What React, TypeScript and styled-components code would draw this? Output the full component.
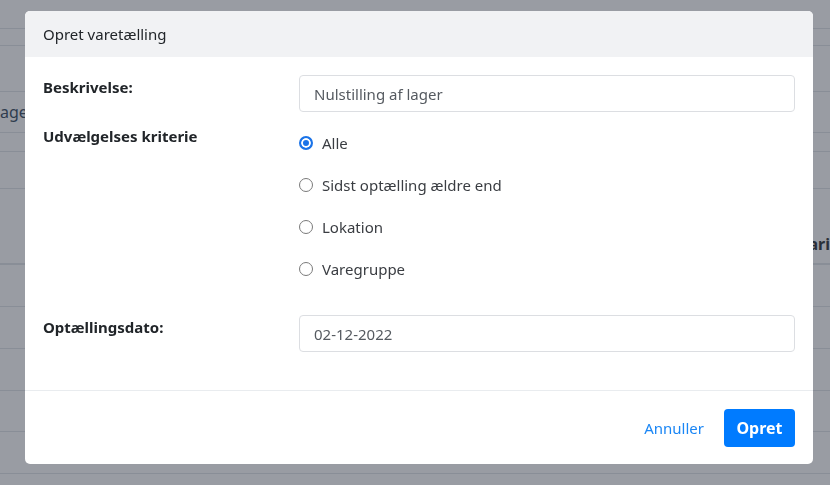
import styled, { createGlobalStyle } from "styled-components";

const GlobalStyle = createGlobalStyle`
  html, body {
    margin: 0;
    padding: 0;
    height: 100%;
    overflow: hidden;
  }
  body {
    font-family: "Noto Sans", "Liberation Sans", sans-serif;
    background: #ffffff;
  }
`;

// page rows behind the backdrop: height and a bit of text at the edges
const pageRows = [
  { h: 29 },
  { h: 17 },
  { h: 46 },
  { h: 41, left: "ager" },
  { h: 19 },
  { h: 37 },
  { h: 76, right: "ari", heavy: true },
  { h: 42 },
  { h: 42 },
  { h: 42 },
  { h: 41 },
  { h: 42 },
];

const criteria = ["Alle", "Sidst optælling ældre end", "Lokation", "Varegruppe"];

function App() {
  return (
    <>
      <GlobalStyle />
      <Page>
        {pageRows.map((row, i) => (
          <PageRow key={i} $height={row.h} $heavy={row.heavy}>
            {row.left && <EdgeLeft>{row.left}</EdgeLeft>}
            {row.right && <EdgeRight>{row.right}</EdgeRight>}
          </PageRow>
        ))}
      </Page>
      <Backdrop />
      <Dialog>
        <Header>Opret varetælling</Header>
        <Body>
          <FormRow>
            <Label>Beskrivelse:</Label>
            <Input defaultValue="Nulstilling af lager" />
          </FormRow>
          <FormRow>
            <Label>Udvælgelses kriterie</Label>
            <RadioList>
              {criteria.map((c, i) => (
                <RadioItem key={c}>
                  <Radio type="radio" name="kriterie" defaultChecked={i === 0} />
                  {c}
                </RadioItem>
              ))}
            </RadioList>
          </FormRow>
          <FormRow>
            <Label>Optællingsdato:</Label>
            <Input defaultValue="02-12-2022" />
          </FormRow>
        </Body>
        <Footer>
          <LinkButton>Annuller</LinkButton>
          <PrimaryButton>Opret</PrimaryButton>
        </Footer>
      </Dialog>
    </>
  );
}

const Page = styled.div`
  display: flex;
  flex-direction: column;
  width: 830px;
`;

const PageRow = styled.div<{ $height: number; $heavy?: boolean }>`
  height: ${(p) => p.$height}px;
  box-sizing: border-box;
  border-bottom: ${(p) => (p.$heavy ? "2px" : "1px")} solid #dee2e6;
  display: flex;
  align-items: center;
  font-size: 16px;
  color: #212529;
`;

const EdgeLeft = styled.span`
  color: #2c3e55;
`;

const EdgeRight = styled.span`
  margin-left: auto;
  align-self: flex-end;
  margin-bottom: 8px;
  font-weight: 700;
`;

const Backdrop = styled.div`
  position: fixed;
  inset: 0;
  background: rgba(52, 58, 72, 0.5);
`;

const Dialog = styled.div`
  position: fixed;
  top: 11px;
  left: 25px;
  width: 788px;
  background: #ffffff;
  border-radius: 5px;
  overflow: hidden;
  display: flex;
  flex-direction: column;
  color: #212529;
`;

const Header = styled.div`
  height: 46px;
  box-sizing: border-box;
  padding: 0 18px;
  display: flex;
  align-items: center;
  background: #f1f2f4;
  font-size: 15px;
`;

const Body = styled.div`
  display: flex;
  flex-direction: column;
  gap: 12px;
  padding: 18px 18px 38px;
  border-bottom: 1px solid #e9ecef;
`;

const FormRow = styled.div`
  display: grid;
  grid-template-columns: 256px 1fr;
  align-items: start;
`;

const Label = styled.div`
  padding-top: 1px;
  font-size: 15px;
  line-height: 22px;
  font-weight: 700;
`;

const Input = styled.input`
  height: 37px;
  box-sizing: border-box;
  width: 100%;
  padding: 0 14px;
  border: 1px solid #dcdee2;
  border-radius: 4px;
  font-family: inherit;
  font-size: 15px;
  color: #555a60;
  outline: none;
`;

const RadioList = styled.div`
  display: flex;
  flex-direction: column;
  gap: 20px;
  padding: 8px 0 23px;
`;

const RadioItem = styled.label`
  display: flex;
  align-items: center;
  gap: 9px;
  height: 22px;
  font-size: 15px;
  color: #3a3d42;
`;

const Radio = styled.input`
  appearance: none;
  margin: 0;
  width: 14px;
  height: 14px;
  border-radius: 50%;
  border: 1px solid #7a7a7a;
  box-sizing: border-box;
  background: #ffffff;

  &:checked {
    border: 2px solid #1a73e8;
    box-shadow: inset 0 0 0 2px #ffffff;
    background: #1a73e8;
  }
`;

const Footer = styled.div`
  height: 73px;
  box-sizing: border-box;
  padding: 0 18px;
  display: flex;
  align-items: center;
  justify-content: flex-end;
  gap: 20px;
`;

const LinkButton = styled.button`
  border: none;
  background: none;
  padding: 0;
  font-family: inherit;
  font-size: 15px;
  color: #1a86f5;
  cursor: pointer;
`;

const PrimaryButton = styled.button`
  height: 38px;
  width: 71px;
  border: none;
  border-radius: 4px;
  background: #007bff;
  color: #ffffff;
  font-family: inherit;
  font-size: 16px;
  font-weight: 700;
  cursor: pointer;
`;

export default App;
